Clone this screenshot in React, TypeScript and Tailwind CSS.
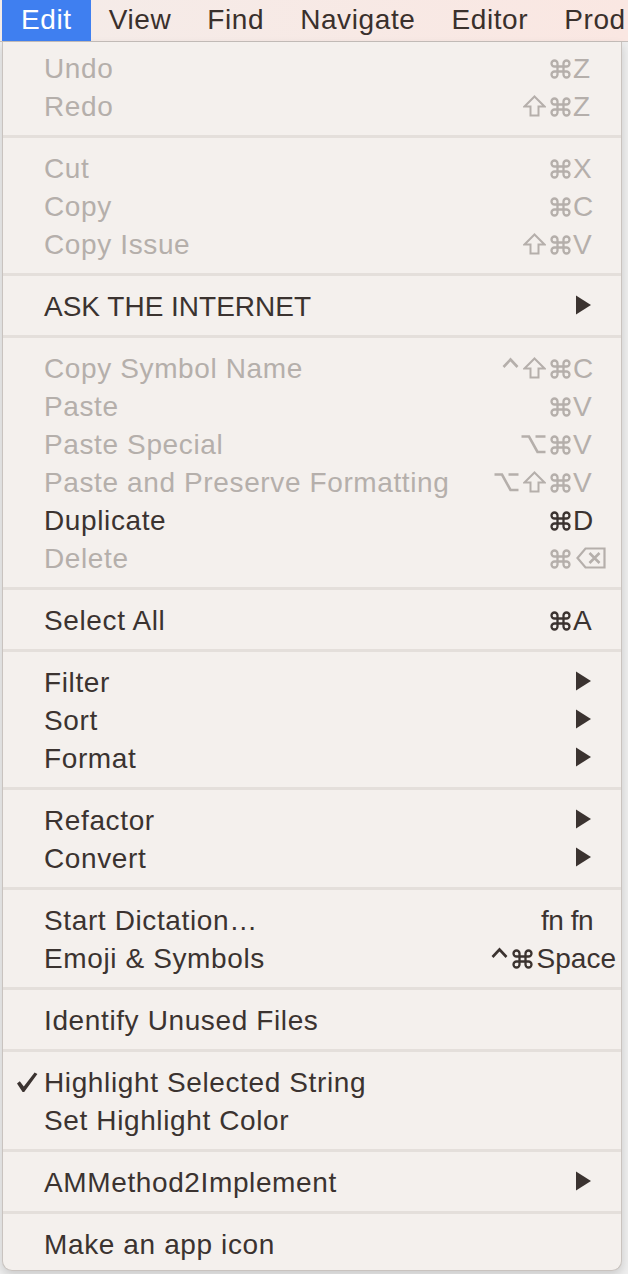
import React from "react";

type Item = {
  label: string;
  dis?: boolean;
  mods?: string[];
  k?: string;
  sub?: boolean;
  raw?: string;
  wide?: boolean;
  check?: boolean;
  caps?: boolean;
};

const groups: Item[][] = [
  [
    { label: "Undo", dis: true, mods: ["cmd"], k: "Z" },
    { label: "Redo", dis: true, mods: ["shift", "cmd"], k: "Z" },
  ],
  [
    { label: "Cut", dis: true, mods: ["cmd"], k: "X" },
    { label: "Copy", dis: true, mods: ["cmd"], k: "C" },
    { label: "Copy Issue", dis: true, mods: ["shift", "cmd"], k: "V" },
  ],
  [{ label: "ASK THE INTERNET", sub: true, caps: true }],
  [
    { label: "Copy Symbol Name", dis: true, mods: ["ctrl", "shift", "cmd"], k: "C" },
    { label: "Paste", dis: true, mods: ["cmd"], k: "V" },
    { label: "Paste Special", dis: true, mods: ["opt", "cmd"], k: "V" },
    { label: "Paste and Preserve Formatting", dis: true, mods: ["opt", "shift", "cmd"], k: "V" },
    { label: "Duplicate", mods: ["cmd"], k: "D" },
    { label: "Delete", dis: true, mods: ["cmd"], k: "del" },
  ],
  [{ label: "Select All", mods: ["cmd"], k: "A" }],
  [
    { label: "Filter", sub: true },
    { label: "Sort", sub: true },
    { label: "Format", sub: true },
  ],
  [
    { label: "Refactor", sub: true },
    { label: "Convert", sub: true },
  ],
  [
    { label: "Start Dictation…", raw: "fn fn" },
    { label: "Emoji & Symbols", raw: "Space", wide: true },
  ],
  [{ label: "Identify Unused Files" }],
  [
    { label: "Highlight Selected String", check: true },
    { label: "Set Highlight Color" },
  ],
  [{ label: "AMMethod2Implement", sub: true }],
  [{ label: "Make an app icon" }],
];

function Cmd() {
  return (
    <svg width="21" height="20" viewBox="0 0 21 20" className="mt-[3px] shrink-0">
      <path
        d="M7.5 7.5 V4.5 A3 3 0 1 0 4.5 7.5 H16.5 A3 3 0 1 0 13.5 4.5 V15.5 A3 3 0 1 0 16.5 12.5 H4.5 A3 3 0 1 0 7.5 15.5 Z"
        fill="none"
        stroke="currentColor"
        strokeWidth="2.3"
      />
    </svg>
  );
}

function Shift() {
  return (
    <svg width="23" height="22" viewBox="0 0 23 22" className="mt-[2px] shrink-0">
      <path
        d="M11.5 1.5 L21.5 11.5 L15.5 11.5 L15.5 20.5 L7.5 20.5 L7.5 11.5 L1.5 11.5 Z"
        fill="none"
        stroke="currentColor"
        strokeWidth="2"
      />
    </svg>
  );
}

function Opt() {
  return (
    <svg width="25" height="20" viewBox="0 0 25 20" className="mt-[2px] shrink-0">
      <path
        d="M0.5 2.5 L8 2.5 L16.5 18 L24.5 18 M14.5 2.5 L24.5 2.5"
        fill="none"
        stroke="currentColor"
        strokeWidth="2.6"
      />
    </svg>
  );
}

function Ctrl() {
  return (
    <svg width="17" height="12" viewBox="0 0 17 12" className="mb-[8px] shrink-0">
      <path d="M1.5 10 L8.5 2.5 L15.5 10" fill="none" stroke="currentColor" strokeWidth="2.6" />
    </svg>
  );
}

function Del() {
  return (
    <svg width="30" height="22" viewBox="0 0 30 22" className="mt-[2px] ml-[3px] shrink-0 overflow-visible">
      <path
        d="M9.5 1.5 L28.5 1.5 L28.5 20.5 L9.5 20.5 L1.5 11 Z"
        fill="none"
        stroke="currentColor"
        strokeWidth="2.2"
      />
      <path d="M13.5 6 L23.5 16 M23.5 6 L13.5 16" stroke="currentColor" strokeWidth="2.6" />
    </svg>
  );
}

function Mod({ m }: { m: string }) {
  if (m === "cmd") return <Cmd />;
  if (m === "shift") return <Shift />;
  if (m === "opt") return <Opt />;
  return <Ctrl />;
}

function Row({ it }: { it: Item }) {
  const color = it.dis ? "text-[#b5afab]" : "text-[#3b3330]";
  return (
    <div className={`relative flex h-[38px] items-center pl-[41px] pr-[28px] ${color}`}>
      {it.check && (
        <svg
          width="24"
          height="22"
          viewBox="0 0 24 22"
          className="absolute left-[12px] top-[9px] text-[#3b3330]"
        >
          <path
            d="M2 12.5 L4.8 10.2 L8.8 15.6 L19.6 1.4 L22.4 3 L9.2 21 L7.6 21 Z"
            fill="currentColor"
          />
        </svg>
      )}
      <span
        className={`flex-1 whitespace-nowrap pt-[4px] ${
          it.caps ? "tracking-[0px]" : "tracking-[0.62px]"
        }`}
      >
        {it.label}
      </span>
      {it.mods && (
        <div className="flex items-center">
          <div className="flex items-center justify-end gap-[4px]">
            {it.mods.map((m, i) => (
              <Mod key={i} m={m} />
            ))}
          </div>
          {it.k === "del" ? (
            <div className="ml-[2px] flex w-[20px] min-w-0 shrink-0">
              <Del />
            </div>
          ) : (
            <span className="ml-[2px] w-[20px] shrink-0 whitespace-nowrap pt-[4px]">{it.k}</span>
          )}
        </div>
      )}
      {it.raw && !it.wide && (
        <span className="whitespace-nowrap pt-[4px] tracking-[-0.5px]">{it.raw}</span>
      )}
      {it.raw && it.wide && (
        <div className="mr-[-23px] flex items-center gap-[4px]">
          <Ctrl />
          <Cmd />
          <span className="whitespace-nowrap pt-[4px]">{it.raw}</span>
        </div>
      )}
      {it.sub && (
        <svg width="17" height="20" viewBox="0 0 17 20" className="mr-[1px]">
          <polygon points="1,0.5 16,10 1,19.5" fill="#3b3330" />
        </svg>
      )}
    </div>
  );
}

export default function App() {
  const menus = ["Edit", "View", "Find", "Navigate", "Editor", "Prod"];
  return (
    <div className="h-[1274px] w-[628px] overflow-hidden bg-[#eeeeee] font-['Liberation_Sans','DejaVu_Sans',sans-serif] text-[28px]">
      <div className="flex h-[42px] items-stretch border-b border-[#c6bfbb] bg-gradient-to-r from-[#f4ece9] to-[#fae7e2] pl-[2px]">
        {menus.map((m, i) => (
          <div
            key={m}
            className={`flex items-center whitespace-nowrap pb-[2px] tracking-[0.6px] ${
              i === 0 ? "bg-[#3f7ff0] px-[19px] text-white" : "px-[18px] text-[#3a302c]"
            }`}
          >
            {m}
          </div>
        ))}
      </div>
      <div className="ml-[2px] w-[620px] rounded-b-[10px] border-x border-b border-[#c9c3bf] bg-[#f4f0ed] pt-[6px] pb-[8px] shadow-[0_4px_10px_rgba(0,0,0,0.15)]">
        {groups.map((g, gi) => (
          <div key={gi}>
            {gi > 0 && (
              <div className="pt-[11px] pb-[10px]">
                <div className="h-[3px] bg-[#e4dfdb]" />
              </div>
            )}
            {g.map((it) => (
              <Row key={it.label} it={it} />
            ))}
          </div>
        ))}
      </div>
    </div>
  );
}
